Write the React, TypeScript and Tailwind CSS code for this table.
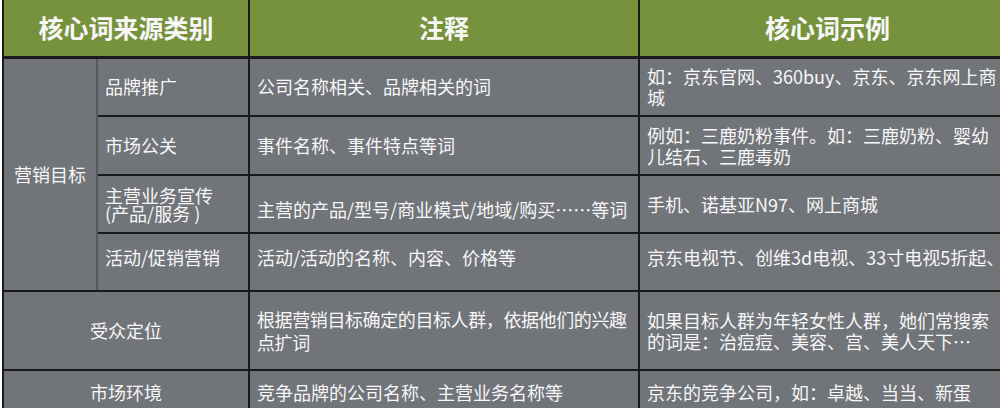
import React from 'react';

// Keyword source table, green header + gray body
const line = 'border-[#1a1a1a]';
const cell = `border-2 ${line} px-[7px] align-middle text-left whitespace-nowrap`;

export default function App() {
  return (
    <div
      className="w-[1000px] h-[408px] overflow-hidden bg-white pl-[2px]"
      style={{ fontFamily: '"Noto Sans CJK SC", "Liberation Sans", sans-serif' }}
    >
      <table className="border-collapse table-fixed w-[1012px] text-[18px] leading-[21px] text-[#f7f7f7]">
        <colgroup>
          <col className="w-[94px]" />
          <col className="w-[152px]" />
          <col className="w-[390px]" />
          <col className="w-[376px]" />
        </colgroup>
        <thead>
          <tr className="h-[57px] bg-[#76923c]">
            <th colSpan={2} className={`border-l-2 border-r-2 border-b-[3px] border-t-0 ${line} text-[25px] font-bold text-center`}>
              核心词来源类别
            </th>
            <th className={`border-r-2 border-b-[3px] border-t-0 ${line} text-[25px] font-bold text-center`}>注释</th>
            <th className={`border-b-[3px] border-t-0 ${line} text-[25px] font-bold text-center`}>核心词示例</th>
          </tr>
        </thead>
        <tbody className="bg-[#717479]">
          <tr className="h-[59px]">
            <td rowSpan={4} className={`border-2 ${line} !border-r-[#55585c] text-center align-middle`}>
              营销目标
            </td>
            <td className={`${cell} !border-l-[#55585c]`}>品牌推广</td>
            <td className={cell}>公司名称相关、品牌相关的词</td>
            <td className={cell}>
              如：京东官网、360buy、京东、京东网上商
              <br />城
            </td>
          </tr>
          <tr className="h-[59px]">
            <td className={`${cell} !border-l-[#55585c]`}>市场公关</td>
            <td className={cell}>事件名称、事件特点等词</td>
            <td className={cell}>
              例如：三鹿奶粉事件。如：三鹿奶粉、婴幼
              <br />儿结石、三鹿毒奶
            </td>
          </tr>
          <tr className="h-[58px]">
            <td className={`${cell} !border-l-[#55585c] leading-[18px]`}>
              主营业务宣传
              <br />(产品/服务 )
            </td>
            <td className={`${cell} pt-[10px]`}>主营的产品/型号/商业模式/地域/购买……等词</td>
            <td className={cell}>手机、诺基亚N97、网上商城</td>
          </tr>
          <tr className="h-[58px]">
            <td className={`${cell} !border-l-[#55585c] pb-[10px]`}>活动/促销营销</td>
            <td className={`${cell} pb-[10px]`}>活动/活动的名称、内容、价格等</td>
            <td className={`${cell} pb-[10px]`}>京东电视节、创维3d电视、33寸电视5折起、</td>
          </tr>
          <tr className="h-[79px]">
            <td colSpan={2} className={`border-2 ${line} text-center align-middle`}>受众定位</td>
            <td className={`${cell} leading-[23px] tracking-[-0.4px]`}>
              根据营销目标确定的目标人群，依据他们的兴趣
              <br />点扩词
            </td>
            <td className={cell}>
              如果目标人群为年轻女性人群，她们常搜索
              <br />的词是：治痘痘、美容、宫、美人天下…
            </td>
          </tr>
          <tr className="h-[44px]">
            <td colSpan={2} className={`border-2 border-b-0 ${line} text-center align-top pt-[11px]`}>市场环境</td>
            <td className={`${cell} border-b-0 align-top pt-[11px]`}>竞争品牌的公司名称、主营业务名称等</td>
            <td className={`${cell} border-b-0 align-top pt-[11px]`}>京东的竞争公司，如：卓越、当当、新蛋</td>
          </tr>
        </tbody>
      </table>
    </div>
  );
}
